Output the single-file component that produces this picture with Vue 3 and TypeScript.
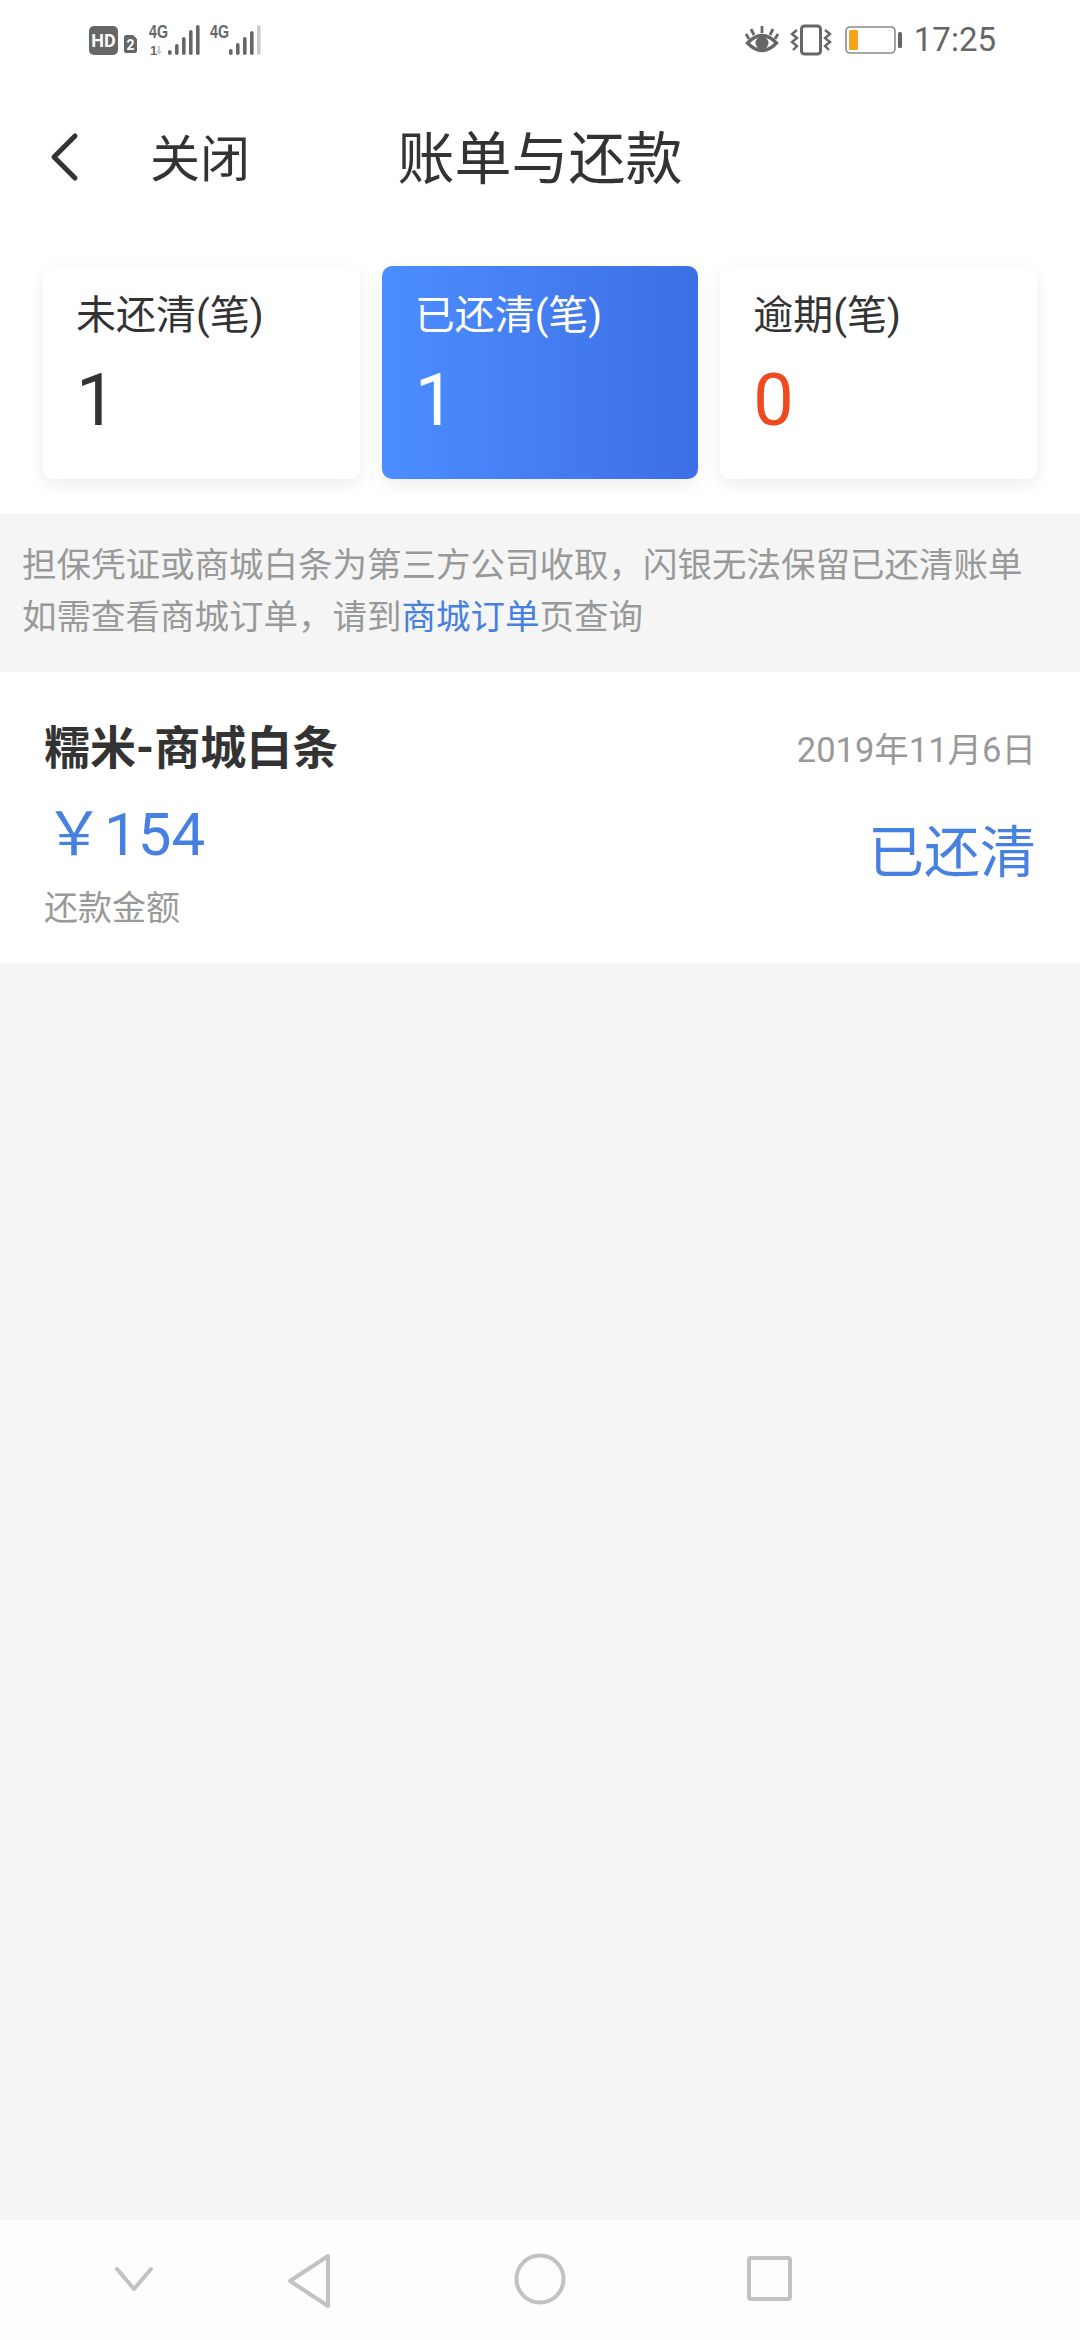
<template>
  <div class="page">
    <div class="status-bar">
      <svg class="status-left" width="175" height="40" viewBox="89 20 175 40">
        <rect x="89" y="26" width="29" height="29" rx="5" fill="#666" />
        <text x="103.5" y="46.5" class="hd">HD</text>
        <path d="M124 37q0-2 2-2h7l4 4v12q0 2-2 2h-9q-2 0-2-2z" fill="#666" />
        <text x="130.5" y="50" class="sim">2</text>
        <text x="149" y="38" class="net" textLength="19" lengthAdjust="spacingAndGlyphs">4G</text>
        <text x="150" y="55" class="net small">1</text>
        <path d="M158 46v5h-2l3 4 3-4h-2v-5z" fill="#c8c8c8" />
        <rect v-for="b in barsOne" :key="b.x" :x="b.x" :y="b.y" width="3.6" :height="55 - b.y" rx="1.8" fill="#666" />
        <text x="210" y="38" class="net" textLength="19" lengthAdjust="spacingAndGlyphs">4G</text>
        <rect v-for="b in barsTwo" :key="b.x" :x="b.x" :y="b.y" width="3.6" :height="55 - b.y" rx="1.8" :fill="b.fill" />
      </svg>
      <div class="status-right">
        <svg width="34" height="30" viewBox="0 0 34 30">
          <path d="M2.5 18Q17 3 31.5 18Q17 33 2.5 18Z" fill="none" stroke="#666" stroke-width="3.4" />
          <circle cx="17" cy="18" r="6.5" fill="#666" />
          <path d="M17 8V1M9 10 6 4M25 10l3-6M4 14 1 9M30 14l3-5" stroke="#666" stroke-width="2.8" fill="none" />
        </svg>
        <svg class="vibrate" width="42" height="32" viewBox="0 0 42 32">
          <rect x="11.5" y="2" width="19" height="28" rx="3" fill="none" stroke="#666" stroke-width="3" />
          <path d="M7 6 2 10l5 4-5 4 5 4-4 4" fill="none" stroke="#666" stroke-width="2.4" />
          <path d="M35 6l5 4-5 4 5 4-5 4 4 4" fill="none" stroke="#666" stroke-width="2.4" />
        </svg>
        <svg class="battery" width="58" height="28" viewBox="0 0 58 28">
          <rect x="1" y="1" width="49" height="26" rx="4" fill="#fff" stroke="#8a8a8a" stroke-width="1.6" />
          <rect x="4" y="4" width="9" height="20" rx="1.5" fill="#f9a11b" />
          <rect x="53" y="6" width="4" height="16" rx="1.5" fill="#666" />
        </svg>
        <span class="time">17:25</span>
      </div>
    </div>

    <header class="nav-head">
      <div class="head-left">
        <svg class="back" width="32" height="50" viewBox="0 0 32 50">
          <path d="M27 4 6 25l21 21" fill="none" stroke="#333" stroke-width="5" stroke-linecap="round" stroke-linejoin="round" />
        </svg>
        <span class="close">关闭</span>
      </div>
      <h1 class="title">账单与还款</h1>
      <div></div>
    </header>

    <section class="stats">
      <div v-for="s in stats" :key="s.label" class="stat" :class="{ active: s.active }">
        <div class="stat-label">{{ s.label }}</div>
        <div class="stat-num" :class="{ danger: s.danger }">{{ s.value }}</div>
      </div>
    </section>

    <section class="notice">
      <p>担保凭证或商城白条为第三方公司收取，闪银无法保留已还清账单</p>
      <p>如需查看商城订单，请到<span class="link">商城订单</span>页查询</p>
    </section>

    <main class="content">
      <article class="bill">
        <div class="bill-top">
          <span class="bill-name">糯米-商城白条</span>
          <span class="bill-date">2019年11月6日</span>
        </div>
        <div class="bill-body">
          <div>
            <div class="bill-amount">￥154</div>
            <div class="bill-sub">还款金额</div>
          </div>
          <div class="bill-state">已还清</div>
        </div>
      </article>
    </main>

    <footer class="sys-nav">
      <svg width="1080" height="120" viewBox="0 0 1080 120">
        <g fill="none" stroke="#c2c2c2" stroke-width="4" stroke-linejoin="round" stroke-linecap="round">
          <path d="M117 49l17 20 17-20" />
          <path d="M328 36v50L290 61z" />
          <circle cx="540" cy="59" r="23.5" />
          <rect x="749" y="38" width="41" height="41" rx="2" />
        </g>
      </svg>
    </footer>
  </div>
</template>

<script setup lang="ts">
interface Stat {
  label: string
  value: number
  active?: boolean
  danger?: boolean
}

const stats: Stat[] = [
  { label: '未还清(笔)', value: 1 },
  { label: '已还清(笔)', value: 1, active: true },
  { label: '逾期(笔)', value: 0, danger: true }
]

const barsOne = [
  { x: 168, y: 50 },
  { x: 175, y: 44 },
  { x: 182, y: 37 },
  { x: 189, y: 30 },
  { x: 196, y: 25 }
]

const barsTwo = [
  { x: 229, y: 49, fill: '#666' },
  { x: 236, y: 43, fill: '#666' },
  { x: 243, y: 37, fill: '#666' },
  { x: 250, y: 31, fill: '#666' },
  { x: 257, y: 25, fill: '#ccc' }
]
</script>

<style scoped>
.page {
  width: 1080px;
  height: 2340px;
  display: flex;
  flex-direction: column;
  background: #fff;
  font-family: Roboto, "Noto Sans CJK SC", sans-serif;
  color: #333;
  overflow: hidden;
}

.status-bar {
  height: 80px;
  flex: none;
  display: flex;
  justify-content: space-between;
  padding: 20px 84px 0 89px;
  box-sizing: border-box;
}
.status-left {
  display: block;
}
.hd {
  font: 700 18px Roboto, sans-serif;
  fill: #fff;
  text-anchor: middle;
}
.sim {
  font: 700 14px Roboto, sans-serif;
  fill: #fff;
  text-anchor: middle;
}
.net {
  font: 700 19px "Liberation Sans", sans-serif;
  fill: #666;
}
.net.small {
  font-size: 13px;
}
.status-right {
  height: 40px;
  display: flex;
  align-items: center;
}
.vibrate {
  margin-left: 11px;
}
.battery {
  margin-left: 13px;
}
.time {
  margin-left: 11px;
  font-size: 33px;
  color: #666;
  line-height: 40px;
}

.nav-head {
  height: 156px;
  flex: none;
  display: grid;
  grid-template-columns: 1fr auto 1fr;
  align-items: center;
  padding-top: 3px;
  box-sizing: border-box;
}
.head-left {
  display: flex;
  align-items: center;
  padding-left: 48px;
}
.back {
  display: block;
  margin-bottom: 5px;
}
.close {
  margin-left: 70px;
  font-size: 50px;
  line-height: 60px;
}
.title {
  margin: 0;
  font-size: 57px;
  font-weight: 400;
  line-height: 70px;
}

.stats {
  flex: none;
  display: grid;
  grid-template-columns: repeat(3, 1fr);
  gap: 22px;
  padding: 30px 43px 35px;
}
.stat {
  height: 213px;
  padding: 22px 0 0 33px;
  box-sizing: border-box;
  background: #fff;
  border-radius: 10px;
  box-shadow: 0 6px 18px rgba(0, 0, 0, 0.07);
}
.stat.active {
  background: linear-gradient(90deg, #4c8eff, #3d6ee4);
  color: #fff;
}
.stat-label {
  font-size: 40px;
  line-height: 56px;
}
.stat-num {
  margin-top: 15px;
  font-size: 72px;
  line-height: 84px;
}
.stat-num.danger {
  color: #f0491f;
}

.notice {
  flex: none;
  height: 158px;
  padding: 25px 0 0 22px;
  box-sizing: border-box;
  background: #f5f5f5;
  color: #999;
  font-size: 34.5px;
  line-height: 52px;
}
.notice p {
  margin: 0;
}
.link {
  color: #4680e0;
}

.content {
  flex: 1;
  background: #f5f5f5;
}
.bill {
  height: 291px;
  padding: 44px 44px 0;
  box-sizing: border-box;
  background: #fff;
}
.bill-top {
  display: flex;
  justify-content: space-between;
  align-items: center;
  height: 56px;
}
.bill-name {
  font-size: 46px;
  font-weight: 700;
}
.bill-date {
  padding-top: 5px;
  font-size: 34.5px;
  color: #999;
}
.bill-body {
  display: flex;
  justify-content: space-between;
  align-items: flex-start;
  margin-top: 28px;
}
.bill-amount {
  font-size: 60px;
  line-height: 70px;
  color: #4680e0;
}
.bill-sub {
  margin-top: 16px;
  font-size: 34px;
  line-height: 44px;
  color: #999;
}
.bill-state {
  margin-top: 18px;
  font-size: 56px;
  line-height: 70px;
  color: #4680e0;
}

.sys-nav {
  flex: none;
  height: 120px;
  background: #fdfdfd;
}
.sys-nav svg {
  display: block;
}
</style>

<style>
html,
body {
  margin: 0;
}
</style>
